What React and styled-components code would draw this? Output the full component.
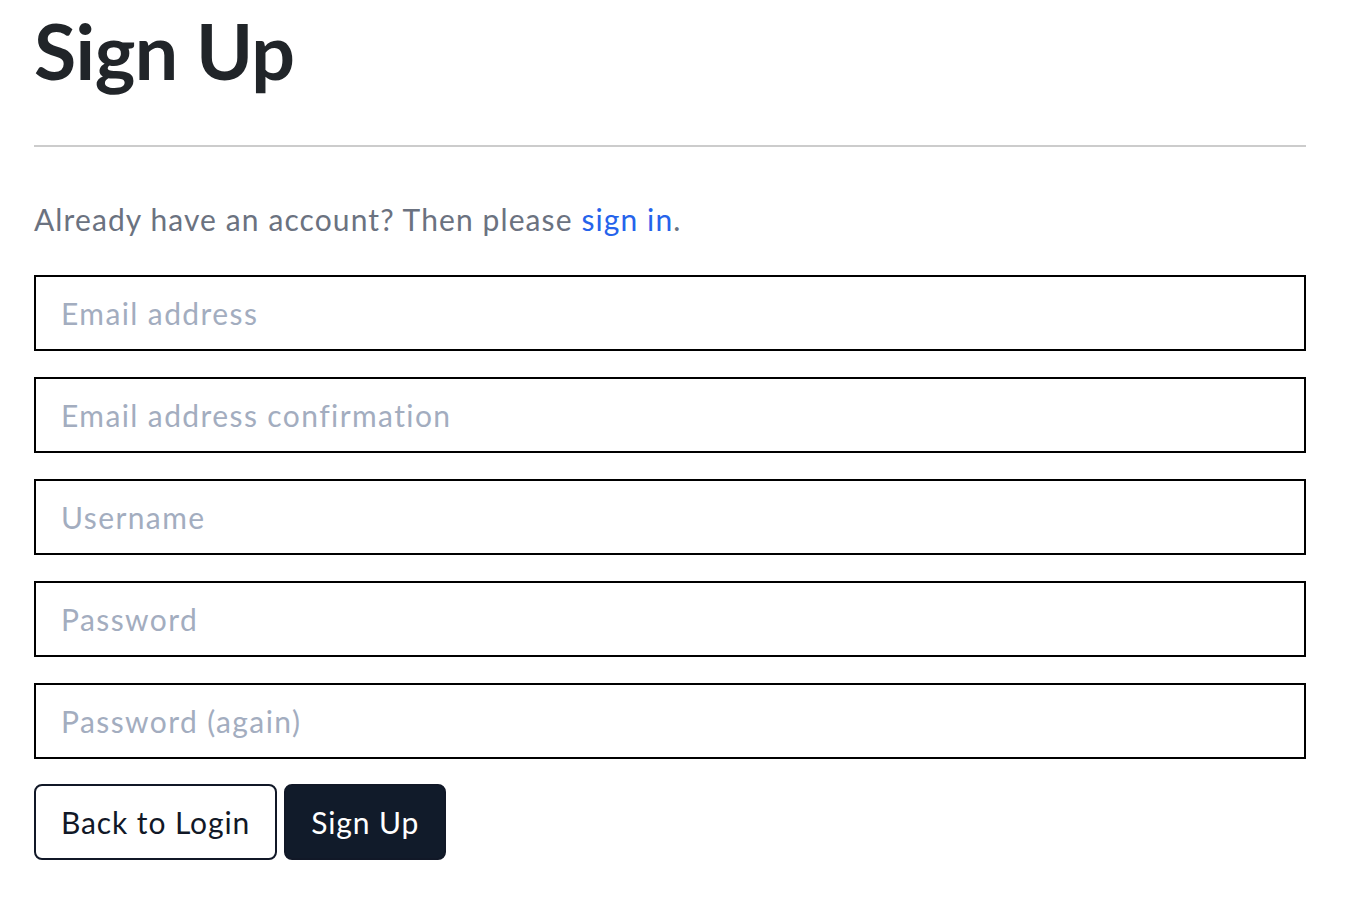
import React from 'react'
import styled, { createGlobalStyle } from 'styled-components'

const GlobalStyle = createGlobalStyle`
    body {
        margin: 0;
        background: #fff;
        font-family: Lato, "Noto Sans", sans-serif;
    }
`

const Page = styled.main`
    width: 1272px;
    padding: 6px 0 0 34px;
`

const Title = styled.h1`
    margin: 0;
    font-size: 77px;
    font-weight: 700;
    line-height: 88px;
    color: #212529;
    letter-spacing: -0.5px;
`

const Rule = styled.hr`
    margin: 51px 0 0;
    border: none;
    border-top: 2px solid #cccccc;
`

const Lead = styled.p`
    margin: 52px 0 0;
    font-size: 30px;
    line-height: 40px;
    letter-spacing: 1.1px;
    color: #6b7280;
`

const SignInLink = styled.a`
    color: #2563eb;
    text-decoration: none;
`

const Form = styled.form`
    display: flex;
    flex-direction: column;
    gap: 26px;
    margin-top: 36px;
`

const Input = styled.input`
    box-sizing: border-box;
    width: 100%;
    height: 76px;
    border: 2px solid #000;
    padding: 0 25px;
    font-family: inherit;
    font-size: 30px;
    letter-spacing: 1.4px;
    color: #111827;
    outline: none;
    &::placeholder {
        color: #a3adbf;
    }
`

const Actions = styled.div`
    display: flex;
    gap: 7px;
    margin-top: -1px;
`

const Button = styled.button`
    box-sizing: border-box;
    height: 76px;
    padding: 0 25px;
    border-radius: 8px;
    border: 2px solid #111827;
    font-family: inherit;
    font-size: 30px;
    letter-spacing: 0.9px;
    background: ${(p) => (p.$primary ? '#111b2a' : '#fff')};
    color: ${(p) => (p.$primary ? '#fff' : '#111827')};
    cursor: pointer;
`

export default function App() {
    return (
        <Page>
            <GlobalStyle />
            <Title>Sign Up</Title>
            <Rule />
            <Lead>
                Already have an account? Then please <SignInLink href="#">sign in</SignInLink>.
            </Lead>
            <Form onSubmit={(e) => e.preventDefault()}>
                <Input type="email" placeholder="Email address" />
                <Input type="email" placeholder="Email address confirmation" />
                <Input type="text" placeholder="Username" />
                <Input type="password" placeholder="Password" />
                <Input type="password" placeholder="Password (again)" />
                <Actions>
                    <Button type="button">Back to Login</Button>
                    <Button type="submit" $primary>Sign Up</Button>
                </Actions>
            </Form>
        </Page>
    )
}
